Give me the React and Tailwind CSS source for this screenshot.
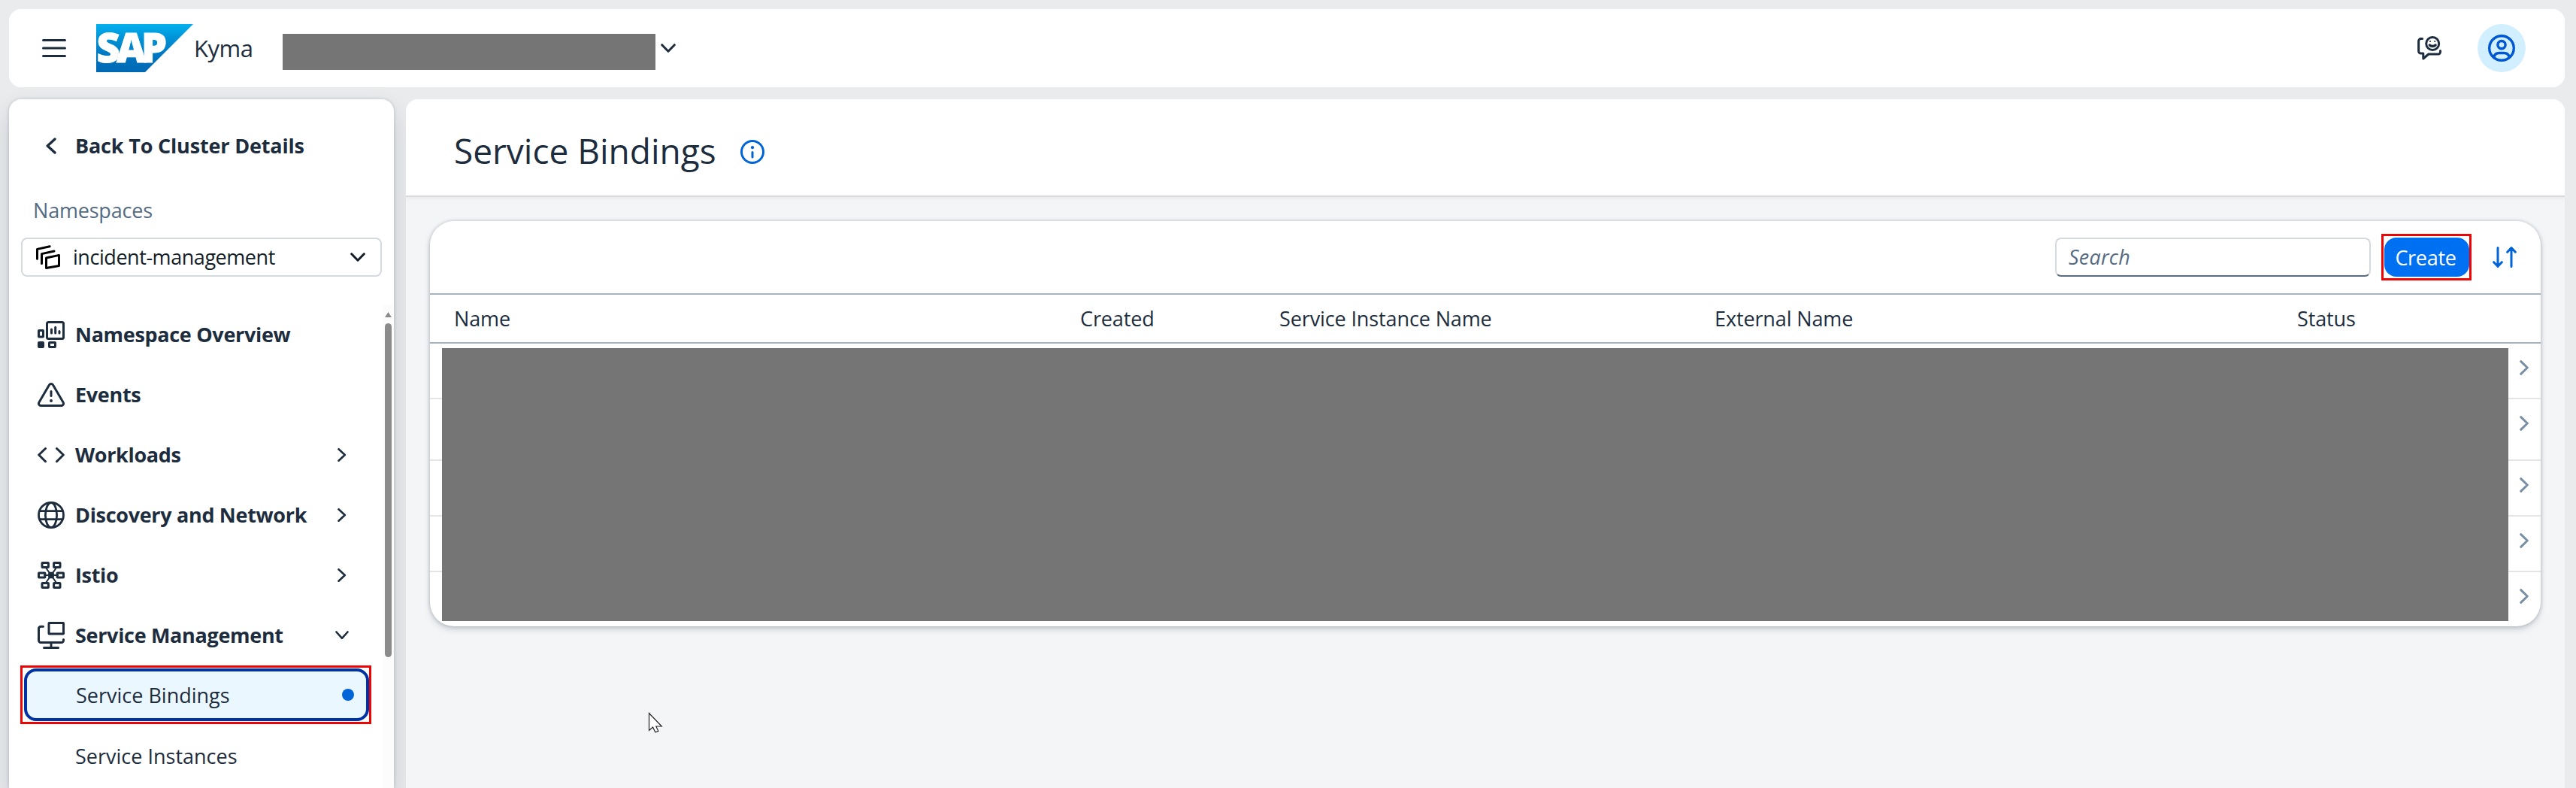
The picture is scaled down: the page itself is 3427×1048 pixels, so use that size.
import React from "react";

function Svg({ w, h, sw = 3, className = "", children }) {
  return (
    <svg
      width={w}
      height={h}
      viewBox={`0 0 ${w} ${h}`}
      fill="none"
      stroke="currentColor"
      strokeWidth={sw}
      strokeLinecap="round"
      strokeLinejoin="round"
      className={`block shrink-0 ${className}`}
    >
      {children}
    </svg>
  );
}

const OverviewIcon = () => (
  <Svg w={36} h={36}>
    <rect x="12.5" y="1.5" width="22" height="22" rx="2" />
    <path d="M18.5 11v5M23.7 8.3v7.7M29 13.5v2.5" />
    <rect x="1.5" y="12.5" width="6" height="8.5" rx="0.5" />
    <rect x="15.5" y="28.5" width="8" height="6" rx="0.5" />
    <rect x="1.5" y="28.5" width="6" height="6" rx="0.5" fill="currentColor" />
  </Svg>
);

const EventsIcon = () => (
  <Svg w={36} h={36}>
    <path d="M15.6 4.8a2.8 2.8 0 0 1 4.8 0l13.6 23.2a2.8 2.8 0 0 1-2.4 4.4H4.4a2.8 2.8 0 0 1-2.4-4.4z" />
    <path d="M18 13.5v6" />
    <circle cx="18" cy="26" r="2" fill="currentColor" stroke="none" />
  </Svg>
);

const WorkloadsIcon = () => (
  <Svg w={36} h={36}>
    <path d="M10.5 9.5L1.7 18l8.8 8.7M25.5 9.5l8.8 8.5-8.8 8.7" />
  </Svg>
);

const GlobeIcon = () => (
  <Svg w={36} h={36} sw={2.8}>
    <circle cx="18" cy="18" r="16.5" />
    <ellipse cx="18" cy="18" rx="7.6" ry="16.5" />
    <path d="M3 12.6h30M3 23.6h30" />
  </Svg>
);

const IstioIcon = () => (
  <Svg w={36} h={36} sw={3}>
    <path d="M11 8l14 20M25 8L11 28M9 18h18" strokeWidth="2" />
    <rect x="6" y="1.5" width="8.4" height="6" rx="0.5" />
    <rect x="21.6" y="1.5" width="8.4" height="6" rx="0.5" />
    <rect x="1.5" y="15" width="8.4" height="6" rx="0.5" />
    <rect x="26.1" y="15" width="8.4" height="6" rx="0.5" />
    <rect x="6" y="28.5" width="8.4" height="6" rx="0.5" />
    <rect x="21.6" y="28.5" width="8.4" height="6" rx="0.5" />
    <rect x="15.6" y="15.2" width="4.8" height="5.6" rx="0.5" />
  </Svg>
);

const ServiceIcon = () => (
  <Svg w={36} h={36}>
    <rect x="15" y="1.5" width="19.5" height="14.5" rx="0.5" />
    <path d="M7.5 6.3H4.2a2.7 2.7 0 0 0-2.7 2.7v15.8a2.7 2.7 0 0 0 2.7 2.7h27.6a2.7 2.7 0 0 0 2.7-2.7v-1.4M18 27.5v7M8.5 34.4h19" />
  </Svg>
);

const NamespaceIcon = () => (
  <Svg w={32} h={32}>
    <path d="M13.5 17l17-3.6v14l-17 3.1z" />
    <path d="M7.5 24.5V11.6l16.5-3.6M1.5 18.3V5.4L18.2 1.7" />
  </Svg>
);

const FeedbackIcon = () => (
  <Svg w={32} h={32}>
    <path d="M6.6 3.6h-2a3 3 0 0 0-3 3V20a3 3 0 0 0 3 3h3.2v7l7-6h13a2.7 2.7 0 0 0 2.7-2.7v-1.7" />
    <circle cx="20.2" cy="10" r="8.5" />
    <path d="M16.3 12c2 1.9 5.8 1.9 7.8 0" strokeWidth="3.4" />
    <circle cx="17" cy="7" r="1.1" fill="currentColor" stroke="none" />
    <circle cx="23.2" cy="7" r="1.1" fill="currentColor" stroke="none" />
  </Svg>
);

const PersonIcon = () => (
  <Svg w={36} h={36} sw={3.4}>
    <circle cx="18" cy="18" r="16.3" />
    <circle cx="18" cy="13.6" r="5.1" />
    <path d="M7.8 29.5c1-3 3.4-5 6.7-5h7c3.3 0 5.7 2 6.7 5" />
  </Svg>
);

const InfoIcon = () => (
  <Svg w={32} h={32} sw={3}>
    <circle cx="16" cy="16" r="14.5" />
    <path d="M16 16.5v6.5" />
    <circle cx="16" cy="10.2" r="2.1" fill="currentColor" stroke="none" />
  </Svg>
);

const SortIcon = () => (
  <Svg w={32} h={28}>
    <path d="M7 1.5v25M1.7 20.7L7 26.3l5.3-5.6M25 26.5v-25M19.7 7.2L25 1.6l5.3 5.6" />
  </Svg>
);

const ChevronDown = () => (
  <Svg w={20} h={12}>
    <path d="M1.7 1.7L10 10.2l8.3-8.5" />
  </Svg>
);

const ChevronRight = () => (
  <Svg w={12} h={20}>
    <path d="M1.7 1.7L10.3 10l-8.6 8.3" />
  </Svg>
);

function Logo() {
  return (
    <svg width="129" height="64" viewBox="0 0 129 64" className="block shrink-0 overflow-visible">
      <defs>
        <linearGradient id="logo" x1="0" y1="0" x2="0" y2="1">
          <stop offset="0" stopColor="#00b1ee" />
          <stop offset="0.3" stopColor="#0092d6" />
          <stop offset="0.7" stopColor="#0073bf" />
          <stop offset="1" stopColor="#0068b3" />
        </linearGradient>
      </defs>
      <path d="M0 0h129L65 64H0z" fill="url(#logo)" />
      <text
        x="0.5 27 60"
        y="51"
        fill="#fff"
        stroke="#fff"
        strokeWidth="1"
        className="font-['Noto_Sans',sans-serif] text-[54px] font-black"
      >
        SAP
      </text>
    </svg>
  );
}

const nav = [
  { label: "Namespace Overview", icon: OverviewIcon },
  { label: "Events", icon: EventsIcon },
  { label: "Workloads", icon: WorkloadsIcon, arrow: "right" },
  { label: "Discovery and Network", icon: GlobeIcon, arrow: "right" },
  { label: "Istio", icon: IstioIcon, arrow: "right" },
  { label: "Service Management", icon: ServiceIcon, arrow: "down" },
];

function NavItem({ label, icon: Icon, arrow }) {
  return (
    <div className="flex h-20 shrink-0 items-center pl-[38px] pr-[45px]">
      <Icon />
      <span className="ml-[14px] flex-1 pb-px font-[660] tracking-[-0.32px]">{label}</span>
      {arrow === "right" && (
        <Svg w={12} h={18} sw={2.6} className="mr-[3px]">
          <path d="M1.5 1.3L9.8 9l-8.3 7.7" />
        </Svg>
      )}
      {arrow === "down" && (
        <Svg w={18} h={12} sw={2.6}>
          <path d="M1.5 1.5L9 9.8l7.5-8.3" />
        </Svg>
      )}
    </div>
  );
}

function Sidebar() {
  return (
    <aside className="flex w-[512px] shrink-0 flex-col rounded-t-2xl bg-white shadow-[0_0_4px_rgba(34,53,72,0.2),0_16px_32px_rgba(34,53,72,0.18)]">
      <div className="mt-[22px] flex h-20 items-center pl-[49px]">
        <Svg w={14} h={22} sw={3.4}>
          <path d="M12 2L2.2 11l9.8 9" />
        </Svg>
        <span className="ml-[25px] pb-[2px] font-[660] tracking-[-0.18px]">Back To Cluster Details</span>
      </div>
      <div className="mt-[23px] flex h-[44px] items-center pl-8 tracking-[-0.2px] text-[#556b82]">Namespaces</div>
      <div className="ml-4 mt-[15px] flex h-[52px] w-[480px] items-center rounded-lg border-2 border-[#d5dadf] pl-[18px] pr-5 text-[#131e29]">
        <span className="text-black">
          <NamespaceIcon />
        </span>
        <span className="ml-[17px] flex-1 pb-px tracking-[-0.45px]">incident-management</span>
        <ChevronDown />
      </div>
      <div className="mt-[37px] flex min-h-0 flex-1">
        <nav className="flex min-w-0 flex-1 flex-col overflow-hidden">
          {nav.map((item) => (
            <NavItem key={item.label} {...item} />
          ))}
          <div className="ml-[15px] flex h-[78px] w-[467px] shrink-0 border-[3px] border-[#ec0505] pb-px pl-[2px] pt-px">
            <div className="flex w-[459px] items-center rounded-2xl border-4 border-[#0032a5] bg-[#eaf7ff] pl-[65px] pr-4">
              <span className="flex-1">Service Bindings</span>
              <span className="size-4 rounded-full bg-[#0064d9]" />
            </div>
          </div>
          <div className="mt-[2px] flex h-20 shrink-0 items-center pl-[88px]">Service Instances</div>
        </nav>
        <div className="flex w-[15px] shrink-0 flex-col items-center bg-[#fcfcfc]">
          <svg width="9" height="7" viewBox="0 0 9 7" className="mt-[10px] block">
            <path d="M4.5 0L9 7H0z" fill="#8b8b8b" />
          </svg>
          <div className="mt-2 h-[444px] w-[9px] rounded-full bg-[#8b8b8b]" />
        </div>
      </div>
    </aside>
  );
}

const rows = ["h-[74px]", "h-[82px]", "h-[74px]", "h-[74px]", "h-[72px]"];

function BindingsCard() {
  return (
    <section className="relative mx-8 mt-8 flex flex-col rounded-[32px] bg-white shadow-[0_0_4px_rgba(34,53,72,0.25),0_4px_8px_rgba(34,53,72,0.2)]">
      <div className="flex h-[98px] items-center justify-end border-b-2 border-[#a8b3bf] pr-8">
        <div className="flex h-[52px] w-[420px] items-center rounded-lg border-2 border-[#d5dadf] border-b-[#556b82] pb-px pl-4 italic tracking-[0.2px] text-[#556b82]">
          Search
        </div>
        <div className="ml-[14px] flex h-[62px] w-[120px] items-center justify-center border-[3px] border-[#ec0505]">
          <button className="flex h-[52px] w-[113px] items-center justify-center rounded-2xl bg-[#0070f2] pr-[2px] font-medium tracking-[-0.3px] text-white">
            Create
          </button>
        </div>
        <span className="ml-7 text-[#0064d9]">
          <SortIcon />
        </span>
      </div>
      <div className="flex h-[65px] items-center border-b-2 border-[#a8b3bf] pl-8 tracking-[-0.12px]">
        <span className="w-[833px]">Name</span>
        <span className="w-[265px]">Created</span>
        <span className="w-[579px]">Service Instance Name</span>
        <span className="w-[775px]">External Name</span>
        <span>Status</span>
      </div>
      <div className="flex flex-col text-[#788fa6]">
        {rows.map((h, i) => (
          <div
            key={i}
            className={`${h} flex justify-end pr-4 pt-[22px] ${i < 4 ? "border-b-2 border-[#e5e5e5]" : ""}`}
          >
            <ChevronRight />
          </div>
        ))}
      </div>
      <div className="absolute bottom-[7px] left-4 right-[43px] h-[363px] bg-[#757575]" />
    </section>
  );
}

export default function App() {
  return (
    <div className="relative flex h-[1048px] w-[3427px] flex-col gap-4 overflow-hidden bg-[#eaebed] pl-3 pr-[15px] pt-3 font-['Open_Sans',sans-serif] text-[27px] leading-none text-[#1d2d3e]">
      <header className="relative z-10 flex h-[104px] shrink-0 items-center rounded-2xl bg-white pl-11 pr-[52px]">
        <Svg w={32} h={24}>
          <path d="M1.5 1.5h29M1.5 12h29M1.5 22.5h29" />
        </Svg>
        <span className="ml-10">
          <Logo />
        </span>
        <span className="w-[119px] pl-px text-[31px] tracking-[-0.5px]">Kyma</span>
        <div className="mt-[10px] h-12 w-[496px] bg-[#757575]" />
        <span className="ml-[7px]">
          <ChevronDown />
        </span>
        <span className="ml-auto mr-12">
          <FeedbackIcon />
        </span>
        <span className="flex size-16 items-center justify-center rounded-full bg-[#d1efff] text-[#0057d2]">
          <PersonIcon />
        </span>
      </header>
      <div className="flex min-h-0 flex-1 gap-4">
        <Sidebar />
        <main className="relative z-10 flex min-w-0 flex-1 flex-col overflow-hidden rounded-t-2xl bg-[#f4f5f7]">
          <div className="flex h-[130px] shrink-0 items-center border-b-2 border-[#d9d9d9] bg-white pl-16 pt-[11px] shadow-[0_2px_4px_rgba(34,53,72,0.06)]">
            <h1 className="pb-[3px] text-[46px]">Service Bindings</h1>
            <span className="ml-8 text-[#0064d9]">
              <InfoIcon />
            </span>
          </div>
          <BindingsCard />
        </main>
      </div>
      <svg width="20" height="29" viewBox="0 0 20 29" className="absolute left-[862px] top-[947px] z-20">
        <path d="M1.5 1.5v23l5-4.5 3.3 6.800 4-1.500-3-6.300h7.500z" fill="#fff" stroke="#222" strokeWidth="1.2" />
      </svg>
    </div>
  );
}
